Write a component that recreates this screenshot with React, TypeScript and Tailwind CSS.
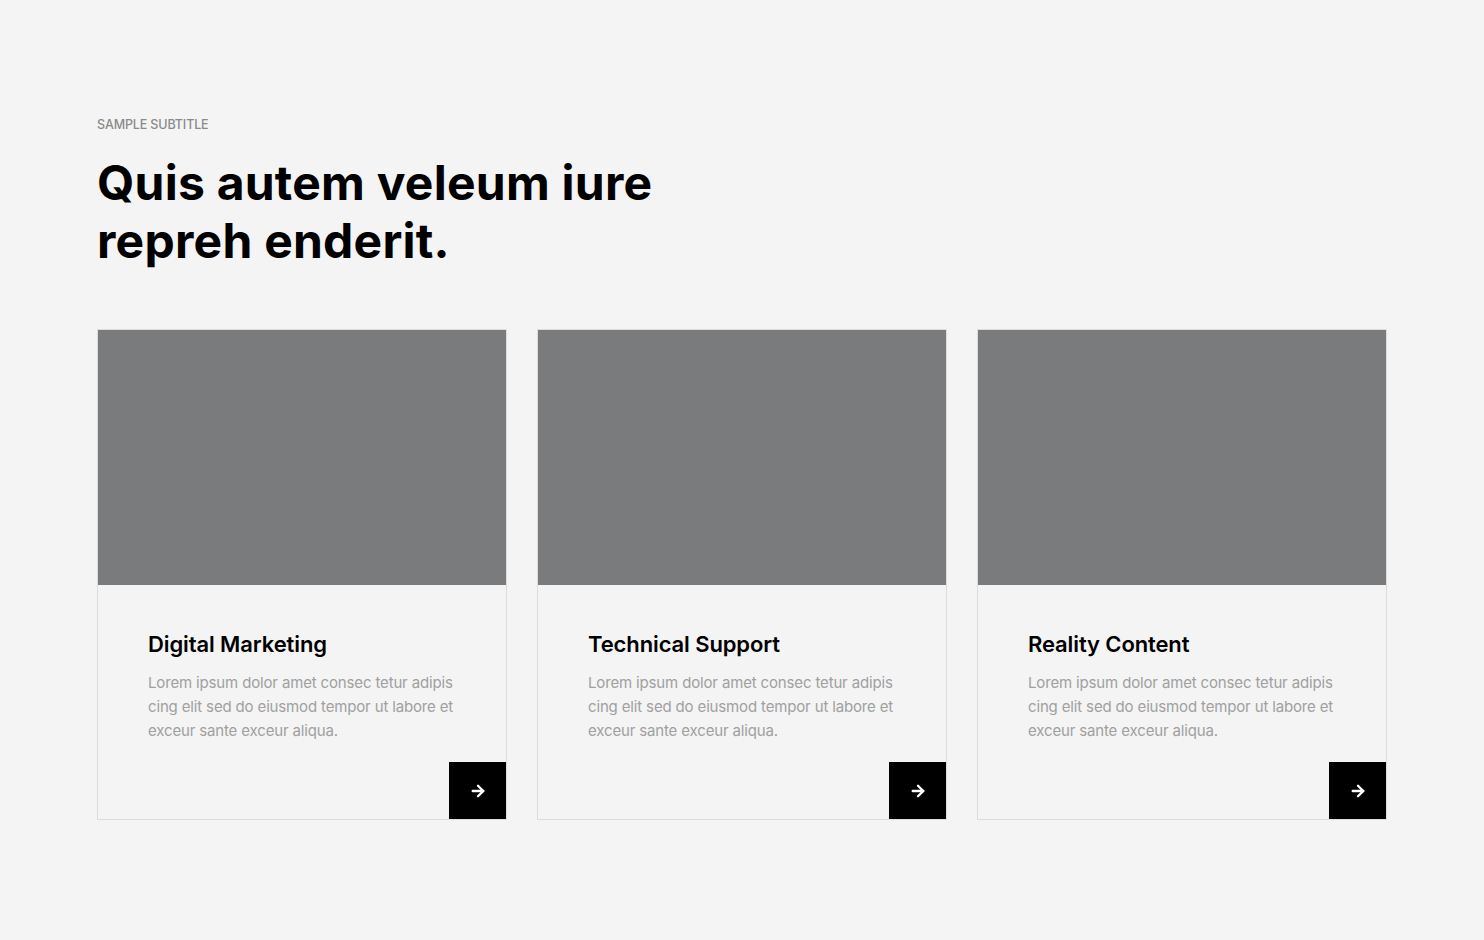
import React from 'react';
import { ArrowRight } from 'lucide-react';

const services = [
  { title: 'Digital Marketing' },
  { title: 'Technical Support' },
  { title: 'Reality Content' },
];

const blurb = 'Lorem ipsum dolor amet consec tetur adipis cing elit sed do eiusmod tempor ut labore et exceur sante exceur aliqua.';

const ServiceCard = ({ title }: { title: string }) => {
  return (
    <div className="flex flex-col border border-[#dcdcdc] bg-[#f4f4f4]">
      <div className="h-[255px] bg-[#7a7b7c]" />
      <div className="flex flex-col pt-[44px] pl-[50px]">
        <h3 className="text-[22px] leading-[30px] font-semibold text-black tracking-[-0.005em]">{title}</h3>
        <p className="mt-[12px] w-[312px] text-[15px] leading-[24px] text-[#a0a0a0] tracking-[-0.01em]">{blurb}</p>
        <div className="mt-[19px] flex justify-end">
          <button className="w-[57px] h-[57px] bg-black flex items-center justify-center">
            <ArrowRight size={18} strokeWidth={3.2} color="#ffffff" />
          </button>
        </div>
      </div>
    </div>
  );
};

const App = () => {
  return (
    <div className="min-h-[940px] bg-[#f4f4f4] font-['Inter','Liberation_Sans',sans-serif]">
      <div className="pl-[97px] pr-[97px] pt-[118px]">
        <span className="block text-[12.5px] leading-[14px] uppercase font-medium text-[#8a8a8a] tracking-[-0.01em]">Sample Subtitle</span>
        <h1 className="mt-[22px] text-[48px] leading-[58px] font-bold text-black tracking-[0.005em]">
          Quis autem veleum iure
          <br />
          repreh enderit.
        </h1>
        <div className="mt-[59px] grid grid-cols-3 gap-[30px] w-[1290px]">
          {services.map((service) => (
            <ServiceCard key={service.title} title={service.title} />
          ))}
        </div>
      </div>
    </div>
  );
};

export default App;
